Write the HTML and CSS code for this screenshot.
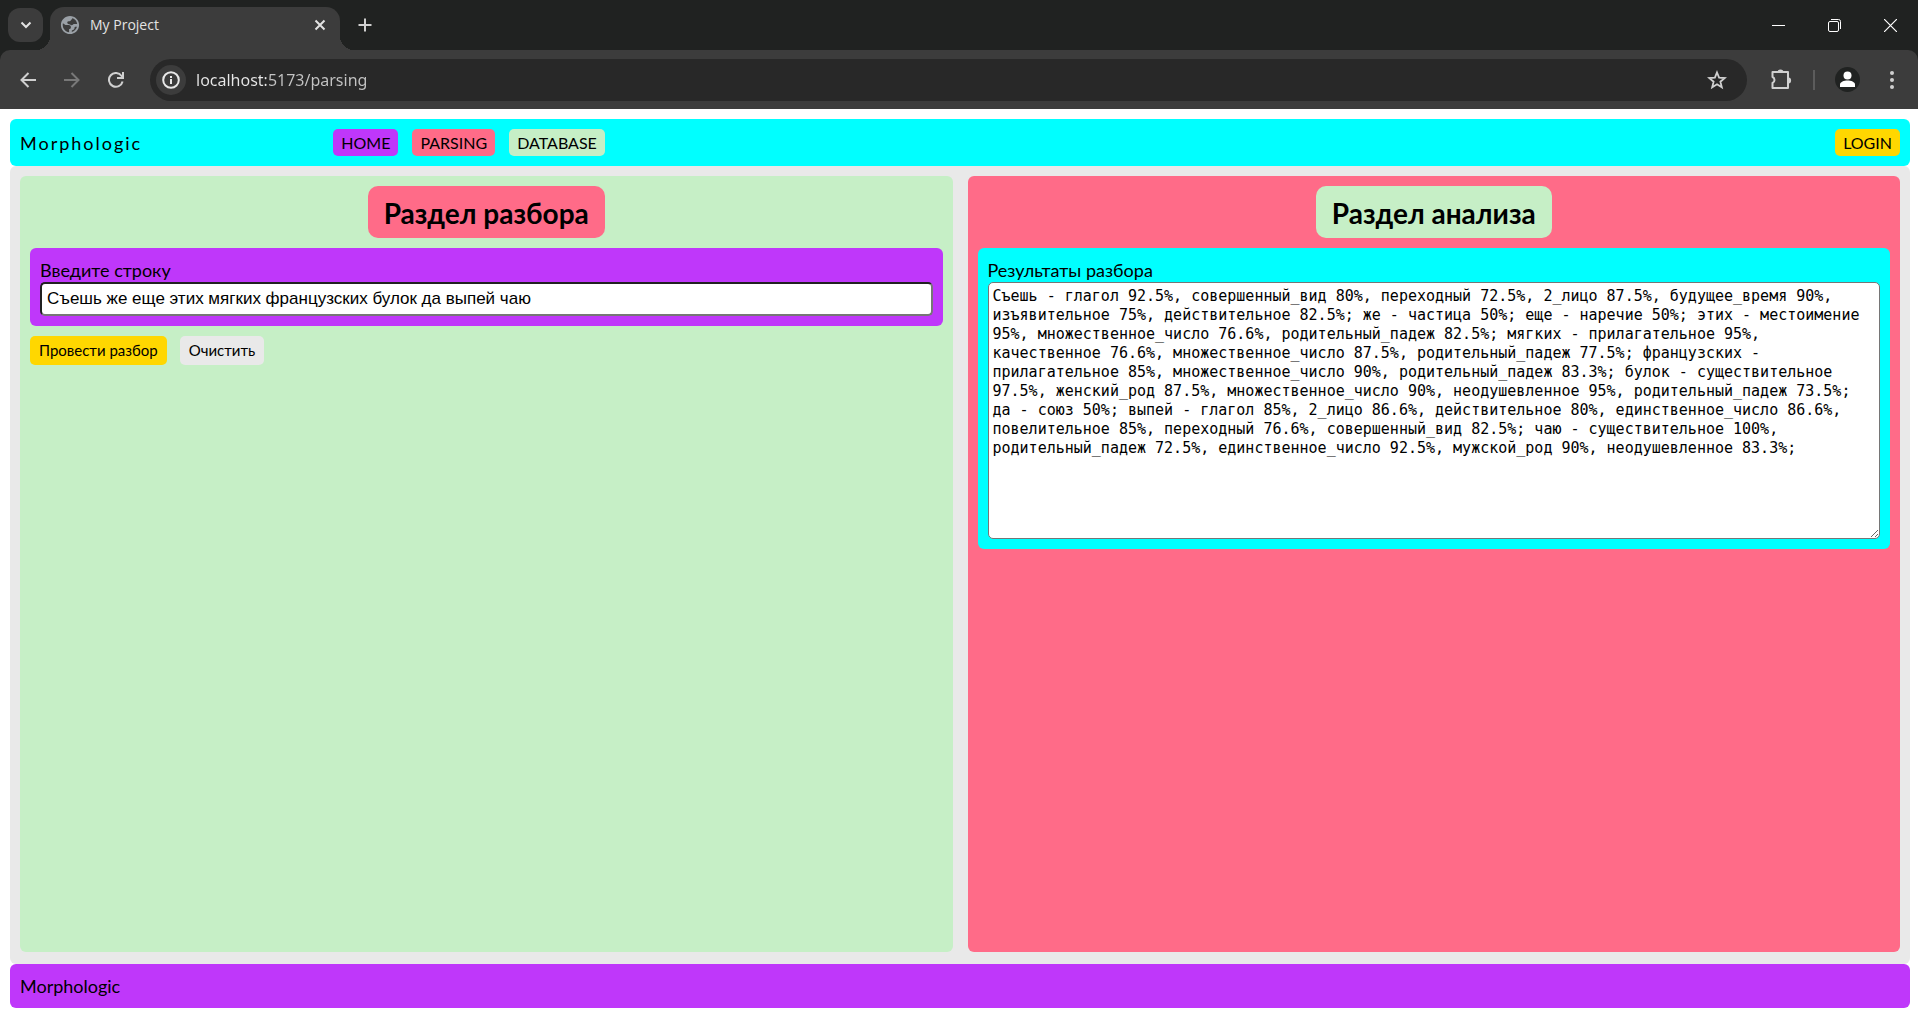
FILE: index.html
```html
<!DOCTYPE html>
<html lang="ru">
<head>
<meta charset="utf-8">
<title>My Project</title>
<link rel="stylesheet" href="styles.css">
</head>
<body>
<div class="browser">
  <div class="tabstrip">
    <button class="tab-search" aria-label="Search tabs">
      <svg width="12" height="12" viewBox="0 0 12 12" fill="none" stroke="#e3e3e3" stroke-width="2"><path d="M1.500 3.500 6 8l4.500-4.500"/></svg>
    </button>
    <div class="tab">
      <svg width="20" height="20" viewBox="1 1 22 22"><path fill="#9aa0a6" d="M12 2C6.480 2 2 6.480 2 12s4.480 10 10 10 10-4.480 10-10S17.520 2 12 2zm-1 17.930c-3.950-.49-7-3.850-7-7.930 0-.62.08-1.210.21-1.790L7 12h3.500c1.500 0 2.500 1 2.500 2.500S12 16.500 11 16.500v3.430zm3-.2V18c2-.5 3-1.500 3-3 0-.6.500-1 1-1h1.700c-.8 2.800-3 5-5.700 5.730zM19.900 11H16c-1 1.500-2.500 1.500-4 .5-1-.8-3-.5-3-2C9 8 10 8 11.500 8S13 6 14.500 5.500V4.400c3 1 5 3.600 5.400 6.600z"/></svg>
      <span class="tab-title">My Project</span>
      <button class="icon-button" aria-label="Close tab">
        <svg width="12" height="12" viewBox="0 0 12 12" stroke="#e3e3e3" stroke-width="2"><path d="m1.500 1.500 9 9m0-9-9 9"/></svg>
      </button>
    </div>
    <button class="icon-button new-tab" aria-label="New tab">
      <svg width="14" height="14" viewBox="0 0 14 14" stroke="#d0d0d0" stroke-width="2"><path d="M7 .5v13M.5 7h13"/></svg>
    </button>
    <div class="window-controls">
      <button class="window-button" aria-label="Minimize"><svg width="13" height="13" viewBox="0 0 13 13" stroke="#fff"><path d="M0 6.500h13"/></svg></button>
      <button class="window-button" aria-label="Restore"><svg width="13" height="13" viewBox="0 0 13 13" stroke="#fff" fill="none"><path d="M3 .5h7.500a2 2 0 0 1 2 2V10"/><rect x=".5" y="2.500" width="10" height="10" rx="1.500"/></svg></button>
      <button class="window-button" aria-label="Close"><svg width="13" height="13" viewBox="0 0 13 13" stroke="#fff" stroke-width="1.200"><path d="m0 0 13 13M13 0 0 13"/></svg></button>
    </div>
  </div>
  <div class="toolbar">
    <button class="icon-button" aria-label="Back"><svg width="16" height="16" viewBox="0 0 16 16" fill="none" stroke="#d0d0d0" stroke-width="2"><path d="M16 8H2M8.500 1 1.500 8l7 7"/></svg></button>
    <button class="icon-button" aria-label="Forward"><svg width="16" height="16" viewBox="0 0 16 16" fill="none" stroke="#787878" stroke-width="2"><path d="M0 8h14M7.500 1l7 7-7 7"/></svg></button>
    <button class="icon-button" aria-label="Reload"><svg width="16" height="16" viewBox="0 0 16 16" fill="none" stroke="#d0d0d0" stroke-width="2"><path d="M14.600 9.500A6.900 6.900 0 1 1 13.600 4L14.500 5.500M15 0v6H9"/></svg></button>
    <div class="omnibox">
      <button class="site-info" aria-label="Site information"><svg width="18" height="18" viewBox="0 0 18 18" fill="none" stroke="#e8e8e8" stroke-width="2"><circle cx="9" cy="9" r="7.800"/><path d="M9 8v5M9 5v2"/></svg></button>
      <input class="address" aria-label="Address" value="localhost:5173/parsing">
      <button class="icon-button" aria-label="Bookmark"><svg width="20" height="20" viewBox="0 0 20 20" fill="none" stroke="#d0d0d0" stroke-width="1.800"><path d="m10 2.500 2.100 5.200 5.600.4-4.300 3.600 1.400 5.500-4.800-3-4.800 3 1.400-5.500-4.300-3.600 5.600-.4z"/></svg></button>
    </div>
    <button class="icon-button" aria-label="Extensions"><svg width="22" height="22" viewBox="0 0 22 22"><path fill="none" stroke="#d0d0d0" stroke-width="2" stroke-linejoin="round" d="M2.500 3H18v16H2.500v-5q2-.8 2-3t-2-3z"/><path fill="#d0d0d0" d="M7.500 3a3 2.600 0 0 1 6 0zM18.500 8.500a2.600 3 0 0 1 0 6z"/></svg></button>
    <span class="divider"></span>
    <button class="profile" aria-label="Profile"><svg width="25" height="25" viewBox="0 0 25 25"><circle cx="12.500" cy="12.500" r="12.500" fill="#202221"/><circle cx="12.500" cy="8.500" r="4" fill="#fff"/><path fill="#fff" d="M5 20v-2.500c0-2.500 4-4 7.500-4s7.500 1.500 7.500 4V20z"/></svg></button>
    <button class="icon-button" aria-label="Menu"><svg width="4" height="18" viewBox="0 0 4 18" fill="#d0d0d0"><circle cx="2" cy="2" r="2"/><circle cx="2" cy="9" r="2"/><circle cx="2" cy="16" r="2"/></svg></button>
  </div>
</div>
<div class="page">
  <header class="header">
    <div class="logo">Morphologic</div>
    <nav class="nav">
      <a class="link link-home" href="#">HOME</a>
      <a class="link link-parsing" href="#">PARSING</a>
      <a class="link link-database" href="#">DATABASE</a>
    </nav>
    <a class="link link-login" href="#">LOGIN</a>
  </header>
  <main class="main">
    <section class="panel panel-parse">
      <h2 class="title title-parse">Раздел разбора</h2>
      <div class="field field-input">
        <label class="label" for="source">Введите строку</label>
        <input class="source" id="source" type="text" value="Съешь же еще этих мягких французских булок да выпей чаю">
      </div>
      <div class="actions">
        <button class="action action-run">Провести разбор</button>
        <button class="action action-clear">Очистить</button>
      </div>
    </section>
    <section class="panel panel-result">
      <h2 class="title title-result">Раздел анализа</h2>
      <div class="field field-output">
        <label class="label" for="result">Результаты разбора</label>
        <textarea class="result" id="result" spellcheck="false">Съешь - глагол 92.5%, совершенный_вид 80%, переходный 72.5%, 2_лицо 87.5%, будущее_время 90%, изъявительное 75%, действительное 82.5%; же - частица 50%; еще - наречие 50%; этих - местоимение 95%, множественное_число 76.6%, родительный_падеж 82.5%; мягких - прилагательное 95%, качественное 76.6%, множественное_число 87.5%, родительный_падеж 77.5%; французских - прилагательное 85%, множественное_число 90%, родительный_падеж 83.3%; булок - существительное 97.5%, женский_род 87.5%, множественное_число 90%, неодушевленное 95%, родительный_падеж 73.5%; да - союз 50%; выпей - глагол 85%, 2_лицо 86.6%, действительное 80%, единственное_число 86.6%, повелительное 85%, переходный 76.6%, совершенный_вид 82.5%; чаю - существительное 100%, родительный_падеж 72.5%, единственное_число 92.5%, мужской_род 90%, неодушевленное 83.3%;</textarea>
      </div>
    </section>
  </main>
  <footer class="footer">Morphologic</footer>
</div>
</body>
</html>
```

FILE: styles.css
```css
* {
  box-sizing: border-box;
}

body {
  margin: 0;
  min-height: 100vh;
  display: flex;
  flex-direction: column;
  background: #fff;
  color: #000;
  font: 18px/24px Lato, sans-serif;
}

button {
  margin: 0;
  padding: 0;
  border: 0;
  background: none;
  cursor: pointer;
}

svg {
  display: block;
}

/* Browser frame */
.browser {
  background: #202221;
  font-family: "Open Sans", sans-serif;
}

.tabstrip {
  display: flex;
  align-items: center;
  height: 50px;
  padding-left: 8px;
}

.tab-search {
  display: grid;
  place-items: center;
  width: 35px;
  height: 34px;
  border-radius: 12px;
  background: #3c3c3c;
}

.tab {
  position: relative;
  display: flex;
  align-items: center;
  align-self: flex-end;
  width: 290px;
  height: 43px;
  margin-left: 7px;
  padding: 0 8px 7px 10px;
  border-radius: 14px 14px 0 0;
  background: #3c3c3c;
}

.tab::before,
.tab::after {
  content: "";
  position: absolute;
  bottom: 0;
  width: 14px;
  height: 14px;
}

.tab::before {
  right: 100%;
  background: radial-gradient(circle at 0 0, transparent 14px, #3c3c3c 14px);
}

.tab::after {
  left: 100%;
  background: radial-gradient(circle at 100% 0, transparent 14px, #3c3c3c 14px);
}

.tab-title {
  flex: 1;
  margin-left: 10px;
  color: #e3e3e3;
  font-size: 14px;
}

.icon-button {
  display: grid;
  place-items: center;
  flex: none;
  width: 24px;
  height: 24px;
}

.new-tab {
  margin-left: 13px;
}

.window-controls {
  display: flex;
  margin-left: auto;
}

.window-button {
  display: grid;
  place-items: center;
  width: 56px;
  height: 50px;
}

.toolbar {
  display: flex;
  align-items: center;
  gap: 20px;
  height: 59px;
  padding: 0 14px 0 16px;
  border-radius: 10px 10px 0 0;
  background: #3c3c3c;
}

.omnibox {
  display: flex;
  align-items: center;
  flex: 1;
  height: 42px;
  margin: 0 2px;
  padding: 0 18px 0 6px;
  border-radius: 21px;
  background: #282828;
}

.site-info {
  display: grid;
  place-items: center;
  width: 30px;
  height: 30px;
  border-radius: 50%;
  background: #3c3c3c;
}

.address {
  flex: 1;
  margin-left: 10px;
  padding: 0;
  border: 0;
  background: linear-gradient(90deg, #e8e8e8 70px, #c4c4c4 70px);
  -webkit-background-clip: text;
  background-clip: text;
  color: transparent;
  font: 16px/24px "Noto Sans", sans-serif;
}

.divider {
  width: 2px;
  height: 20px;
  background: #5c5c5c;
}

/* Page */
.page {
  display: flex;
  flex-direction: column;
  flex: 1;
  padding: 10px 8px 10px 10px;
}

.header {
  display: grid;
  grid-template-columns: 1fr 4fr 1fr;
  align-items: center;
  padding: 10px;
  border-radius: 6px;
  background: #00ffff;
}

.logo {
  letter-spacing: 2px;
}

.nav {
  display: flex;
  gap: 14px;
}

.link {
  padding: 0 8px;
  border-radius: 5px;
  color: #000;
  font-size: 16px;
  line-height: 27px;
  text-decoration: none;
}

.link-home {
  background: #bf37fa;
}

.link-parsing {
  background: #ff6b88;
}

.link-database {
  background: #c6efc6;
}

.link-login {
  justify-self: end;
  background: #ffd700;
}

.main {
  display: grid;
  grid-template-columns: 1fr 1fr;
  gap: 15px;
  flex: 1;
  padding: 10px 10px 12px;
  border-radius: 6px;
  background: #e9e9e9;
}

.panel {
  padding: 10px;
  border-radius: 6px;
}

.panel-parse {
  background: #c6efc6;
}

.panel-result {
  background: #ff6b88;
}

.title {
  width: fit-content;
  margin: 0 auto 10px;
  padding: 10px 16px 8px;
  border-radius: 10px;
  font-size: 28px;
  line-height: 34px;
}

.title-parse {
  background: #ff6b88;
}

.title-result {
  background: #c6efc6;
}

.field {
  display: flex;
  flex-direction: column;
  padding: 10px;
  border-radius: 6px;
}

.field-input {
  background: #bf37fa;
}

.field-output {
  background: #00ffff;
}

.source {
  height: 34px;
  padding: 0 5px;
  border: 2px inset #767676;
  border-radius: 5px;
  background: #fff;
  color: #000;
  font: 17px/24px "Liberation Sans", sans-serif;
}

.result {
  height: 257px;
  padding: 4px;
  border: 1px solid #767676;
  border-radius: 5px;
  background: #fff;
  color: #000;
  font: 15px/19px "DejaVu Sans Mono", monospace;
}

.actions {
  display: flex;
  gap: 13px;
  margin-top: 10px;
}

.action {
  padding: 0 9px;
  border-radius: 5px;
  color: #000;
  font: 15px/29px Lato, sans-serif;
}

.action-run {
  background: #ffd700;
}

.action-clear {
  background: #e9e9e9;
}

.footer {
  padding: 10px;
  border-radius: 6px;
  background: #bf37fa;
}
```
